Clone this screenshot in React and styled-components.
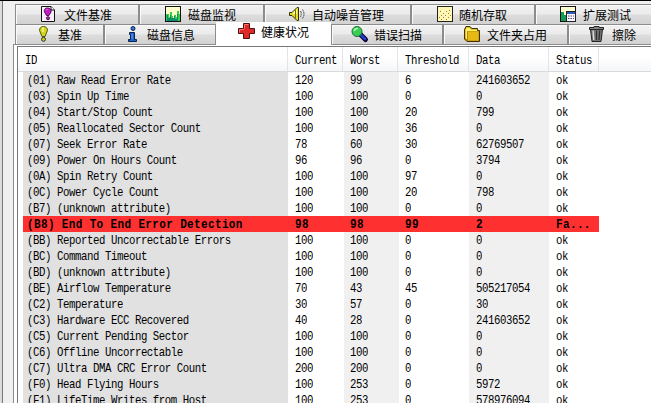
import React from "react";
import styled, { createGlobalStyle } from "styled-components";

const Global = createGlobalStyle`
  *{box-sizing:border-box}
  html,body{margin:0;height:100%;overflow:hidden;background:#f0f0f0}
`;
const Window = styled.div`
  width:651px;height:403px;overflow:hidden;background:#f0f0f0;
  border-top:1px solid #000;color:#000;display:flex;
  font-family:"Liberation Mono","Noto Sans CJK SC",monospace;
`;
const Edge = styled.div`
  width:3px;flex:none;border-right:1px solid #777;background:#dcdcdc;
`;
const Content = styled.div`
  flex:none;width:648px;padding:3px 0 0 10px;display:flex;flex-direction:column;
`;
const TabRow = styled.div`
  display:flex;height:${p => p.$h}px;margin-left:2px;flex:none;
`;
const Tab = styled.div`
  flex:none;width:${p => p.$w}px;height:${p => (p.$active ? 23 : 20)}px;
  margin-top:${p => (p.$active ? -2 : 0)}px;
  padding-left:${p => p.$pad}px;
  padding-bottom:${p => (p.$active ? 3 : 0)}px;
  display:flex;align-items:center;gap:${p => p.$gap}px;
  z-index:${p => (p.$active ? 1 : 0)};
  border:solid #8c8c8c;border-width:${p => (p.$active ? "0" : "1px 1px 0 1px")};
  background:${p => (p.$active ? "#fff" : "linear-gradient(#f2f2f2,#ebebeb 48%,#dddddd 52%,#d2d2d2)")};
  box-shadow:${p => (p.$active ? "none" : "inset 1px 1px #fafafa")};
`;
const TabLabel = styled.span`
  font:12px/16px "Noto Sans CJK SC",sans-serif;white-space:nowrap;
`;
const Icon = styled.svg`
  flex:none;display:block;overflow:visible;margin-bottom:2px;
`;
const Panel = styled.div`
  flex:1;min-height:0;border:solid #8c8c8c;border-width:1px 0 0 1px;
  background:#fff;padding:1px 0 0 3px;
`;
const List = styled.div`
  height:100%;border:solid #777;border-width:1px 0 0 1px;background:#fff;
`;
const Header = styled.div`
  display:grid;grid-template-columns:270px 55px 55px 71px 80px 50px 1fr;height:25px;
  border-bottom:1px solid #d8dbde;background:linear-gradient(#fff 45%,#f5f6f8);
`;
const HeadCell = styled.div`
  padding:6px 0 0 7px;border-right:1px solid #e1e4e8;
  &:last-child{border-right:0}
`;
const Row = styled.div`
  display:grid;grid-template-columns:265px 55px 55px 71px 80px 50px;
  width:576px;height:16px;margin-left:5px;
  background:${p => (p.$bad
    ? "#ff3030"
    : "linear-gradient(90deg,#e1e1e1 265px,#fff 265px 321px,#f0f0f0 321px 376px,#fff 376px 446px,#f0f0f0 446px 526px,#fff 526px)")};
`;
const Cell = styled.div`
  height:16px;padding:1px 0 0 ${p => (p.$first ? 4 : 7)}px;white-space:nowrap;
`;
const Text = styled.span`
  display:block;white-space:pre;
  font:${p => (p.$bold ? "bold 11px" : "10.7px")}/16px "Liberation Mono",monospace;
  letter-spacing:${p => (p.$bold ? 0.36 : -0.42)}px;
  transform:scaleY(1.14);
`;

const icons = {
  file: () => (
    <Icon width="14" height="16" viewBox="0 0 14 16">
      <path d="M.5 .5H10L13.5 4V15.5H.5Z" fill="#f6f0f8" stroke="#111" />
      <path d="M10 .5V4H13.5" fill="#fff" stroke="#111" />
      <path d="M6.5 2C3.5 2 3 4 3.5 6L5.5 9.5H8L10 6C10.5 3.5 9 2 6.5 2Z" fill="#c41cc4" stroke="#541054" />
      <path d="M5.5 4L6.5 3" stroke="#ff9cff" />
      <circle cx="7" cy="12.2" r="1.5" fill="#c41cc4" stroke="#541054" />
    </Icon>
  ),
  chart: () => (
    <Icon width="16" height="16" viewBox="0 0 16 16">
      <rect x=".5" y=".5" width="15" height="15" fill="#ffffcb" stroke="#111" />
      <path d="M1 15V8H4V11H5V6H7V10H8V12H9V9H11V11H12V5H14V8H15V15Z" fill="#35cf4c" />
      <path d="M2 15V9H3V12H5V9H6V12H9V10H10V13H12V8H13V15Z" fill="#108a6c" />
    </Icon>
  ),
  sound: () => (
    <Icon width="17" height="16" viewBox="0 0 17 16">
      <path d="M.5 6.5H3L8 1.5H9.5V14.5H8L3 9.5H.5Z" fill="#e6dd27" stroke="#302e05" />
      <path d="M4 6.5L8 3V8H4Z" fill="#ffff8d" />
      <path d="M6.5 4V12" stroke="#6d690c" />
      <path d="M11.5 5Q13 8 11.5 11M13.5 3.5Q16.5 8 13.5 12.5" fill="none" stroke="#444" strokeDasharray="2 .6" />
    </Icon>
  ),
  random: () => (
    <Icon width="16" height="16" viewBox="0 0 16 16">
      <rect x=".5" y=".5" width="15" height="15" fill="#fff7b8" stroke="#222" />
      <path d="M2 11.5h1M4 9.5h1M3 5.5h1M6 11.5h1M6 7.5h1M8 9.5h1M9 5.5h1M11 7.5h1M12 4.5h1M11 11.5h1M13 9.5h1M4 13.5h1M9 13.5h1" stroke="#a47b24" />
    </Icon>
  ),
  extended: () => (
    <Icon width="16" height="16" viewBox="0 0 16 16">
      <rect x=".5" y=".5" width="15" height="15" fill="#ffffd1" stroke="#111" />
      <path d="M1 6H4V9H6V15H1Z" fill="#129b55" />
      <rect x="6.5" y="5.5" width="9" height="10" fill="#f5f5ff" stroke="#222" />
      <path d="M7 7H15" stroke="#3159bb" strokeWidth="2" />
      <path d="M8 10h1.5m1 0H12m1 0h1M8 12.5h1.5m1 0H12m1 0h1" stroke="#4e4e67" />
    </Icon>
  ),
  bulb: () => (
    <Icon width="9" height="16" viewBox="0 0 9 16">
      <path d="M4.5 .5C1.5 .5 .5 2.5 .5 4.5L3 10.5H6L8.5 4.5C8.5 2 7 .5 4.5 .5Z" fill="#d1d51b" stroke="#55570b" />
      <path d="M3 2.5L4 2V6" fill="none" stroke="#ffffb0" strokeWidth="1.2" />
      <circle cx="4.5" cy="13.3" r="2" fill="#c9cd16" stroke="#333" />
    </Icon>
  ),
  info: () => (
    <Icon width="10" height="16" viewBox="0 0 10 16">
      <circle cx="5" cy="2.5" r="2" fill="#2e78dc" stroke="#102248" />
      <path d="M1.5 6.5H6.5V13.5H8.5V15.5H.5V13.5H2.5V8.5H1.5Z" fill="#1966d1" stroke="#102248" />
      <path d="M4 8V13" stroke="#65a7ff" />
    </Icon>
  ),
  health: () => (
    <Icon width="17" height="16" viewBox="0 0 17 16">
      <path d="M5.5 .5H11.5V5.5H16.5V10.5H11.5V15.5H5.5V10.5H.5V5.5H5.5Z" fill="#df2929" stroke="#4d1111" />
      <path d="M6.5 5.5V1.5H10.5M1.5 9.5V6.5H6" fill="none" stroke="#ff7770" />
    </Icon>
  ),
  scan: () => (
    <Icon width="17" height="16" viewBox="0 0 17 16">
      <path d="M9 8L14.5 13.5" stroke="#080838" strokeWidth="5" strokeLinecap="round" />
      <path d="M10 9L14 13" stroke="#263fcb" strokeWidth="2.5" strokeLinecap="round" />
      <circle cx="6" cy="5.5" r="5" fill="#38ce51" stroke="#157034" />
      <path d="M3 5Q4 2 7 2.5" fill="none" stroke="#b2ffbb" strokeWidth="1.5" />
    </Icon>
  ),
  folder: () => (
    <Icon width="16" height="16" viewBox="0 0 16 16">
      <path d="M.5 3.5L2 .5H6L8 2.5H13.5V4.5H15.5V15.5H3L.5 13Z" fill="#b88906" stroke="#443500" />
      <path d="M1.5 4V12L3 13.5V5H13V3.5H7L5.5 1.5H2.5Z" fill="#fff36b" />
      <path d="M4 5.5H14.5V14.5H4Z" fill="#e8b817" />
    </Icon>
  ),
  trash: () => (
    <Icon width="15" height="16" viewBox="0 0 15 16">
      <path d="M1.5 3.5H13.5L12 15.5H3Z" fill="#777" stroke="#222" />
      <path d="M.5 1.5H5V.5H10V1.5H14.5V3.5H.5Z" fill="#888" stroke="#222" />
      <path d="M4 4.5L4.8 14" stroke="#ddd" strokeWidth="1.3" />
      <path d="M7.5 4.5V14M10.7 4.5L10 14" stroke="#303030" strokeWidth="1.3" />
    </Icon>
  ),
};

const upperTabs = [
  ["file", "文件基准", 124, 25, 9],
  ["chart", "磁盘监视", 125, 25, 7],
  ["sound", "自动噪音管理", 147, 24, 6],
  ["random", "随机存取", 124, 25, 6],
  ["extended", "扩展测试", 124, 24, 7],
];
const lowerTabs = [
  ["bulb", "基准", 89, 23, 10],
  ["info", "磁盘信息", 112, 23, 9],
  ["health", "健康状况", 115, 22, 6, true],
  ["scan", "错误扫描", 112, 19, 6],
  ["folder", "文件夹占用", 125, 20, 7],
  ["trash", "擦除", 90, 20, 8],
];
const Tabs = ({ items, height }) => (
  <TabRow $h={height}>
    {items.map(([icon, label, w, pad, gap, active]) => {
      const Glyph = icons[icon];
      return (
        <Tab key={icon} $w={w} $pad={pad} $gap={gap} $active={active}>
          <Glyph /><TabLabel>{label}</TabLabel>
        </Tab>
      );
    })}
  </TabRow>
);

const heads = ["ID", "Current", "Worst", "Threshold", "Data", "Status", ""];
const rows = [
  ["(01) Raw Read Error Rate", "120", "99", "6", "241603652", "ok"],
  ["(03) Spin Up Time", "100", "100", "0", "0", "ok"],
  ["(04) Start/Stop Count", "100", "100", "20", "799", "ok"],
  ["(05) Reallocated Sector Count", "100", "100", "36", "0", "ok"],
  ["(07) Seek Error Rate", "78", "60", "30", "62769507", "ok"],
  ["(09) Power On Hours Count", "96", "96", "0", "3794", "ok"],
  ["(0A) Spin Retry Count", "100", "100", "97", "0", "ok"],
  ["(0C) Power Cycle Count", "100", "100", "20", "798", "ok"],
  ["(B7) (unknown attribute)", "100", "100", "0", "0", "ok"],
  ["(B8) End To End Error Detection", "98", "98", "99", "2", "Fa..."],
  ["(BB) Reported Uncorrectable Errors", "100", "100", "0", "0", "ok"],
  ["(BC) Command Timeout", "100", "100", "0", "0", "ok"],
  ["(BD) (unknown attribute)", "100", "100", "0", "0", "ok"],
  ["(BE) Airflow Temperature", "70", "43", "45", "505217054", "ok"],
  ["(C2) Temperature", "30", "57", "0", "30", "ok"],
  ["(C3) Hardware ECC Recovered", "40", "28", "0", "241603652", "ok"],
  ["(C5) Current Pending Sector", "100", "100", "0", "0", "ok"],
  ["(C6) Offline Uncorrectable", "100", "100", "0", "0", "ok"],
  ["(C7) Ultra DMA CRC Error Count", "200", "200", "0", "0", "ok"],
  ["(F0) Head Flying Hours", "100", "253", "0", "5972", "ok"],
  ["(F1) LifeTime Writes from Host", "100", "253", "0", "578976094", "ok"],
];

export default function App() {
  return (
    <>
      <Global />
      <Window>
        <Edge />
        <Content>
          <Tabs items={upperTabs} height={20} />
          <Tabs items={lowerTabs} height={20} />
          <Panel>
            <List>
              <Header>
                {heads.map((h, i) => <HeadCell key={i}><Text>{h}</Text></HeadCell>)}
              </Header>
              {rows.map(r => {
                const bad = r[5] !== "ok";
                return (
                  <Row key={r[0]} $bad={bad}>
                    {r.map((v, i) => (
                      <Cell key={i} $first={i === 0}><Text $bold={bad}>{v}</Text></Cell>
                    ))}
                  </Row>
                );
              })}
            </List>
          </Panel>
        </Content>
      </Window>
    </>
  );
}
